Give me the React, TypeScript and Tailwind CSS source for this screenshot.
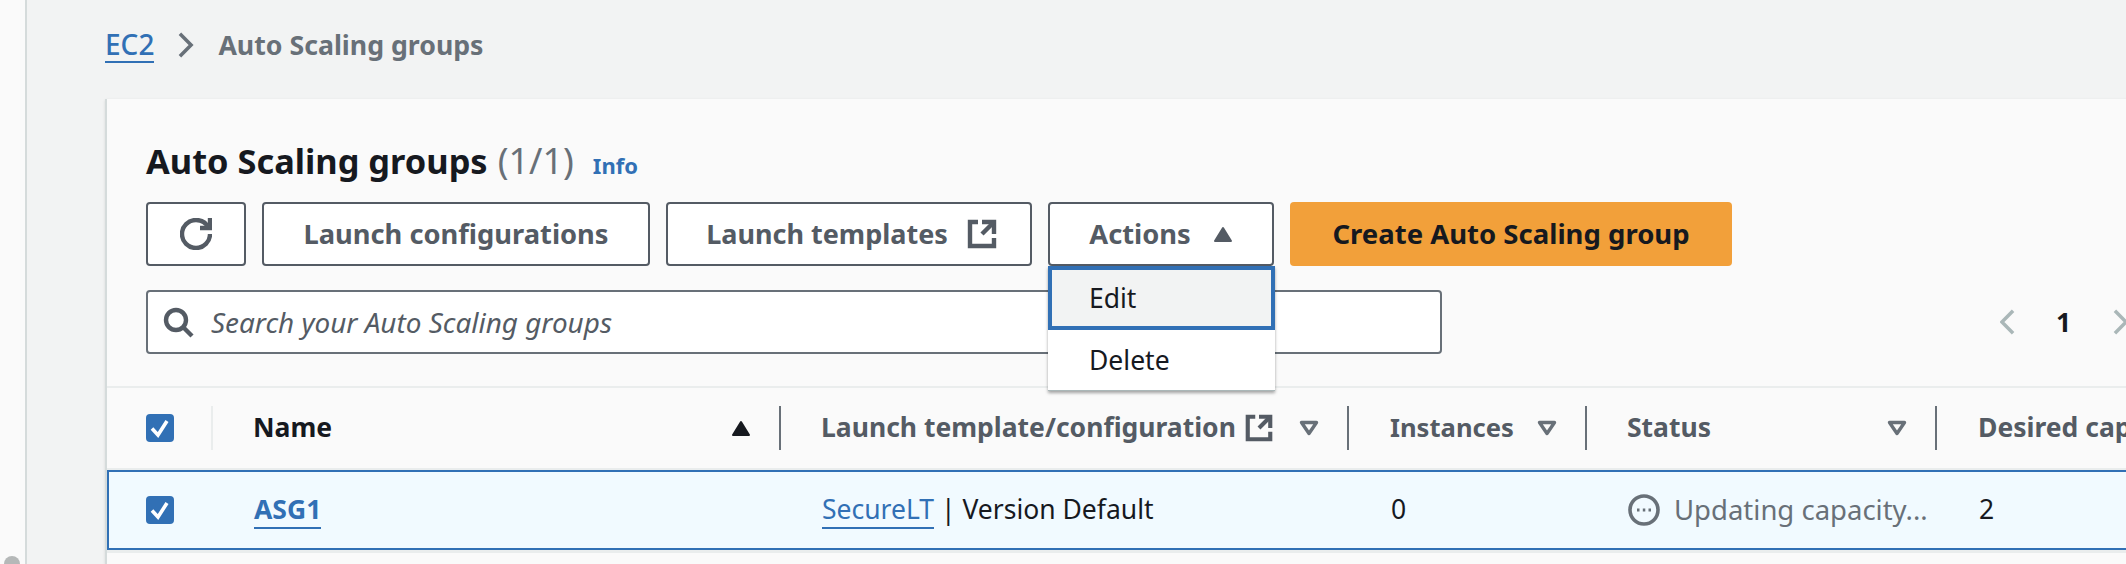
import React from 'react';

const RefreshIcon = () => (
  <svg viewBox="0 0 16 16" className="w-[32px] h-[32px]" fill="none" stroke="#545b64" strokeWidth="2.2">
    <path d="M10 5h5V0" />
    <path d="M15 8c0 3.87-3.13 7-7 7s-7-3.13-7-7 3.13-7 7-7c2.79 0 5.2 1.63 6.33 4" />
  </svg>
);

const ExternalIcon = ({ size }: { size: string }) => (
  <svg viewBox="0 0 16 16" className={size} fill="none" stroke="#545b64" strokeWidth="2.2">
    <path d="M14 8V2H8" />
    <path d="M14 2 8 8" />
    <path d="M6 2H2v12h12v-4" />
  </svg>
);

const FilterCaret = () => (
  <svg viewBox="0 0 20 16" className="w-[20px] h-[16px]" fill="none" stroke="#687078" strokeWidth="3.4" strokeLinejoin="round">
    <path d="M2.5 2.5h15l-7.5 11z" />
  </svg>
);

const UpCaret = ({ color }: { color: string }) => (
  <svg viewBox="0 0 20 16" className="w-[20px] h-[16px]" fill={color} stroke={color} strokeWidth="2" strokeLinejoin="round">
    <path d="M10 2 18 15H2z" />
  </svg>
);

const Check = () => (
  <span className="w-[28px] h-[28px] rounded-[4px] bg-[#3170b5] flex items-center justify-center">
    <svg viewBox="0 0 28 28" className="w-[28px] h-[28px]" fill="none" stroke="#fff" strokeWidth="3.6">
      <path d="M6 14.5 12 21 21 7" />
    </svg>
  </span>
);

const Chevron = ({ dir, color, size }: { dir: 'left' | 'right'; color: string; size: string }) => (
  <svg viewBox="0 0 16 28" className={size} fill="none" stroke={color} strokeWidth="3.8">
    <path d={dir === 'right' ? 'M2 2l12 12L2 26' : 'M14 2 2 14l12 12'} />
  </svg>
);

const btn =
  'h-[64px] rounded-[4px] border-2 border-[#545b64] bg-white flex items-center justify-center text-[#545b64] font-bold text-[27.3px]';

export default function App() {
  return (
    <div className="w-[2126px] h-[564px] overflow-hidden flex bg-[#f2f3f3] text-[26.5px] text-[#16191f] font-['Noto_Sans','Open_Sans',sans-serif]">
      {/* left rail */}
      <div className="w-[27px] shrink-0 bg-[#fafafa] border-r-2 border-[#d5dbdb] relative">
        <div className="absolute left-[4px] top-[556px] w-[16px] h-[30px] rounded-full bg-[#b5b8b8]" />
      </div>

      <div className="flex-1 pl-[78px] flex flex-col min-w-0">
        {/* breadcrumb */}
        <div className="h-[99px] pb-[9px] flex items-center font-medium">
          <span className="text-[28px] text-[#3170b5] border-b-2 border-[#3170b5] leading-[34px]">EC2</span>
          <span className="ml-[23px] mr-[24px]">
            <Chevron dir="right" color="#687078" size="w-[17px] h-[26px]" />
          </span>
          <span className="text-[#687078] font-bold text-[26.7px]">Auto Scaling groups</span>
        </div>

        {/* card */}
        <div className="flex-1 w-[2100px] bg-[#fafafa] border-l-2 border-[#d5dbdb] shadow-sm">
          <div className="pl-[39px] pt-[42px]">
            <div className="flex items-baseline h-[61px]">
              <span className="text-[34.4px] font-bold leading-[40px]">Auto Scaling groups</span>
              <span className="text-[36px] text-[#687078] ml-[10px] leading-[40px]">(1/1)</span>
              <span className="text-[22px] font-bold text-[#3170b5] ml-[19px]">Info</span>
            </div>

            <div className="flex gap-[16px]">
              <button className={`${btn} w-[100px]`}>
                <RefreshIcon />
              </button>
              <button className={`${btn} w-[388px]`}>Launch configurations</button>
              <button className={`${btn} w-[366px] gap-[18px] pl-[6px]`}>
                <span className="text-[27px]">Launch templates</span>
                <ExternalIcon size="w-[32px] h-[32px]" />
              </button>
              <div className="relative">
                <button className={`${btn} w-[226px] gap-[22px]`}>
                  Actions
                  <UpCaret color="#545b64" />
                </button>
                <div className="absolute z-10 left-0 top-[64px] w-[227px] bg-white border-b border-[#aab7b8] shadow-[0_2px_3px_rgba(0,0,0,0.35)]">
                  <div className="h-[64px] border-[4px] border-[#3170b5] bg-[#f2f3f3] flex items-center pl-[37px] pt-[2px]">Edit</div>
                  <div className="h-[60px] flex items-center pl-[41px] pt-[2px]">Delete</div>
                </div>
              </div>
              <button className="h-[64px] w-[442px] rounded-[4px] bg-[#f2a03a] font-bold text-[27.5px] flex items-center justify-center">
                Create Auto Scaling group
              </button>
            </div>

            <div className="flex items-center mt-[24px]">
              <div className="w-[1296px] h-[64px] rounded-[4px] border-2 border-[#687078] bg-white flex items-center pl-[14px] gap-[17px]">
                <svg viewBox="0 0 16 16" className="w-[32px] h-[32px]" fill="none" stroke="#545b64" strokeWidth="2.2">
                  <circle cx="7" cy="7" r="5" />
                  <path d="M11 11l4 4" />
                </svg>
                <span className="italic text-[#545b64] text-[27.9px] pt-[2px]">Search your Auto Scaling groups</span>
              </div>
              <div className="flex items-center ml-[558px]">
                <Chevron dir="left" color="#aab7b8" size="w-[15px] h-[26px]" />
                <span className="font-bold ml-[41px] mr-[42px] pt-[2px]">1</span>
                <Chevron dir="right" color="#aab7b8" size="w-[15px] h-[26px]" />
              </div>
            </div>
          </div>

          {/* table */}
          <div className="mt-[32px] border-t-2 border-[#eaeded]">
            <div className="h-[80px] flex items-center font-bold text-[#545b64]">
              <div className="w-[106px] shrink-0 pl-[39px] h-[44px] flex items-center border-r-2 border-[#eaeded]">
                <Check />
              </div>
              <div className="w-[568px] shrink-0 h-[44px] flex items-center pl-[40px] pr-[28px] justify-between border-r-2 border-[#687078] text-[#16191f]">
                Name
                <UpCaret color="#16191f" />
              </div>
              <div className="w-[568px] shrink-0 h-[44px] flex items-center pl-[40px] pr-[28px] justify-between border-r-2 border-[#687078]">
                <span className="flex items-center gap-[8px]">
                  Launch template/configuration
                  <ExternalIcon size="w-[30px] h-[30px]" />
                </span>
                <FilterCaret />
              </div>
              <div className="w-[238px] shrink-0 h-[44px] flex items-center pl-[41px] pr-[28px] justify-between border-r-2 border-[#687078]">
                <span className="text-[25.6px]">Instances</span>
                <FilterCaret />
              </div>
              <div className="w-[350px] shrink-0 h-[44px] flex items-center pl-[40px] pr-[28px] justify-between border-r-2 border-[#687078]">
                Status
                <FilterCaret />
              </div>
              <div className="pl-[41px] whitespace-nowrap">Desired capacity</div>
            </div>

            <div className="border-t-2 border-[#eaeded]">
              <div className="h-[80px] flex items-center bg-[#f1faff] border-y-2 border-l-2 border-[#3170b5]">
                <div className="w-[104px] shrink-0 pl-[37px] flex items-center">
                  <Check />
                </div>
                <div className="w-[568px] shrink-0 pl-[41px]">
                  <span className="font-bold text-[#3170b5] border-b-2 border-[#3170b5]">ASG1</span>
                </div>
                <div className="w-[568px] shrink-0 pl-[41px]">
                  <span className="text-[#3170b5] border-b-2 border-[#3170b5]">SecureLT</span> | Version Default
                </div>
                <div className="w-[238px] shrink-0 pl-[42px]">0</div>
                <div className="w-[350px] shrink-0 pl-[41px] flex items-center gap-[14px] text-[#687078]">
                  <svg viewBox="0 0 32 32" className="w-[32px] h-[32px] shrink-0" fill="none" stroke="#687078" strokeWidth="3.6">
                    <circle cx="16" cy="16" r="14" />
                    <path d="M9 16h2.5M14.8 16h2.5M20.5 16H23" strokeWidth="3" />
                  </svg>
                  <span className="whitespace-nowrap text-[27.5px]">Updating capacity...</span>
                </div>
                <div className="pl-[42px]">2</div>
              </div>
              <div className="h-[3px] bg-[#eaeded]" />
            </div>
          </div>
        </div>
      </div>
    </div>
  );
}
